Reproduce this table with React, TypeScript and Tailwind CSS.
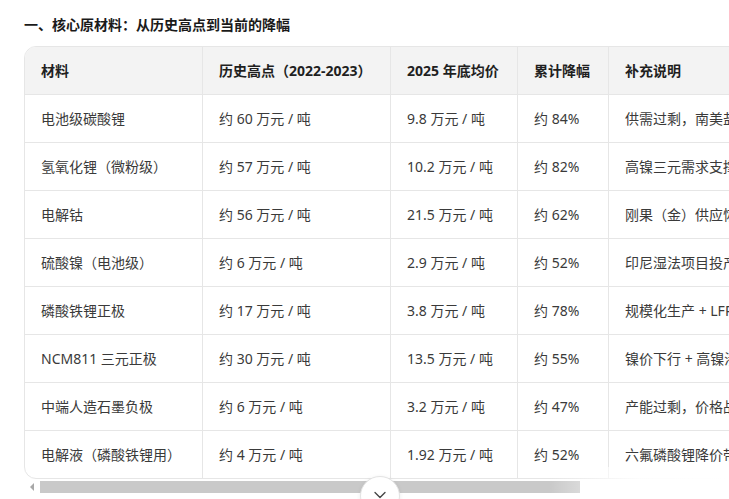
import { ChevronDown } from 'lucide-react';

const rows = [
  ['电池级碳酸锂', '约 60 万元 / 吨', '9.8 万元 / 吨', '约 84%', '供需过剩，南美盐湖与澳洲锂矿放量'],
  ['氢氧化锂（微粉级）', '约 57 万元 / 吨', '10.2 万元 / 吨', '约 82%', '高镍三元需求支撑有限'],
  ['电解钴', '约 56 万元 / 吨', '21.5 万元 / 吨', '约 62%', '刚果（金）供应恢复，库存高企'],
  ['硫酸镍（电池级）', '约 6 万元 / 吨', '2.9 万元 / 吨', '约 52%', '印尼湿法项目投产，产能释放'],
  ['磷酸铁锂正极', '约 17 万元 / 吨', '3.8 万元 / 吨', '约 78%', '规模化生产 + LFP 技术成熟'],
  ['NCM811 三元正极', '约 30 万元 / 吨', '13.5 万元 / 吨', '约 55%', '镍价下行 + 高镍渗透放缓'],
  ['中端人造石墨负极', '约 6 万元 / 吨', '3.2 万元 / 吨', '约 47%', '产能过剩，价格战持续'],
  ['电解液（磷酸铁锂用）', '约 4 万元 / 吨', '1.92 万元 / 吨', '约 52%', '六氟磷酸锂降价带动'],
];

const headers = ['材料', '历史高点（2022-2023）', '2025 年底均价', '累计降幅', '补充说明'];
const widths = ['w-[178px]', 'w-[188px]', 'w-[127px]', 'w-[91px]', 'w-[420px]'];

export default function App() {
  return (
    <div
      className="relative w-[729px] h-[499px] overflow-hidden bg-white text-[#333]"
      style={{ fontFamily: '"Noto Sans", "Noto Sans CJK SC", sans-serif' }}
    >
      <div className="pl-6 pt-[14px]">
        <h2 className="text-[14px] leading-[22px] font-bold text-[#1a1a1a] whitespace-nowrap">
          一、核心原材料：从历史高点到当前的降幅
        </h2>

        {/* table card */}
        <div className="mt-[10px] w-[1010px] rounded-xl border border-[#e6e6e6] overflow-hidden">
          <div className="flex bg-[#f3f3f3] border-b border-[#e6e6e6]">
            {headers.map((h, i) => (
              <div
                key={h}
                className={`${widths[i]} shrink-0 h-[47px] flex items-center px-4 text-[14px] font-bold text-[#1f1f1f] whitespace-nowrap ${i < 4 ? 'border-r border-[#e6e6e6]' : ''}`}
              >
                {h}
              </div>
            ))}
          </div>
          {rows.map((r, ri) => (
            <div key={ri} className={`flex ${ri < rows.length - 1 ? 'border-b border-[#e6e6e6]' : ''}`}>
              {r.map((c, i) => (
                <div
                  key={i}
                  className={`${widths[i]} shrink-0 h-[47px] flex items-center px-4 text-[14px] text-[#3a3a3a] whitespace-nowrap ${i < 4 ? 'border-r border-[#e6e6e6]' : ''}`}
                >
                  {c}
                </div>
              ))}
            </div>
          ))}
        </div>
      </div>

      {/* fake horizontal scrollbar */}
      <div className="mt-[1px] ml-[24px] flex items-center h-[13px]">
        <div className="w-[16px] flex justify-center">
          <div className="w-0 h-0 border-y-[4px] border-y-transparent border-r-[4px] border-r-[#a8a8a8]" />
        </div>
        <div className="w-[540px] h-[12px] bg-[#c9c9c9]" />
      </div>

      {/* right fade over the scroll area */}
      <div className="absolute right-0 bottom-0 w-[180px] h-[32px] bg-gradient-to-r from-transparent via-white/90 to-white" />

      {/* collapse button */}
      <div className="absolute left-[360px] top-[476px] w-[40px] h-[40px] rounded-full bg-white border border-[#e3e3e3] shadow-[0_1px_4px_rgba(0,0,0,0.08)] flex justify-center pt-[8px]">
        <ChevronDown size={20} strokeWidth={1.6} className="text-[#444]" />
      </div>
    </div>
  );
}
